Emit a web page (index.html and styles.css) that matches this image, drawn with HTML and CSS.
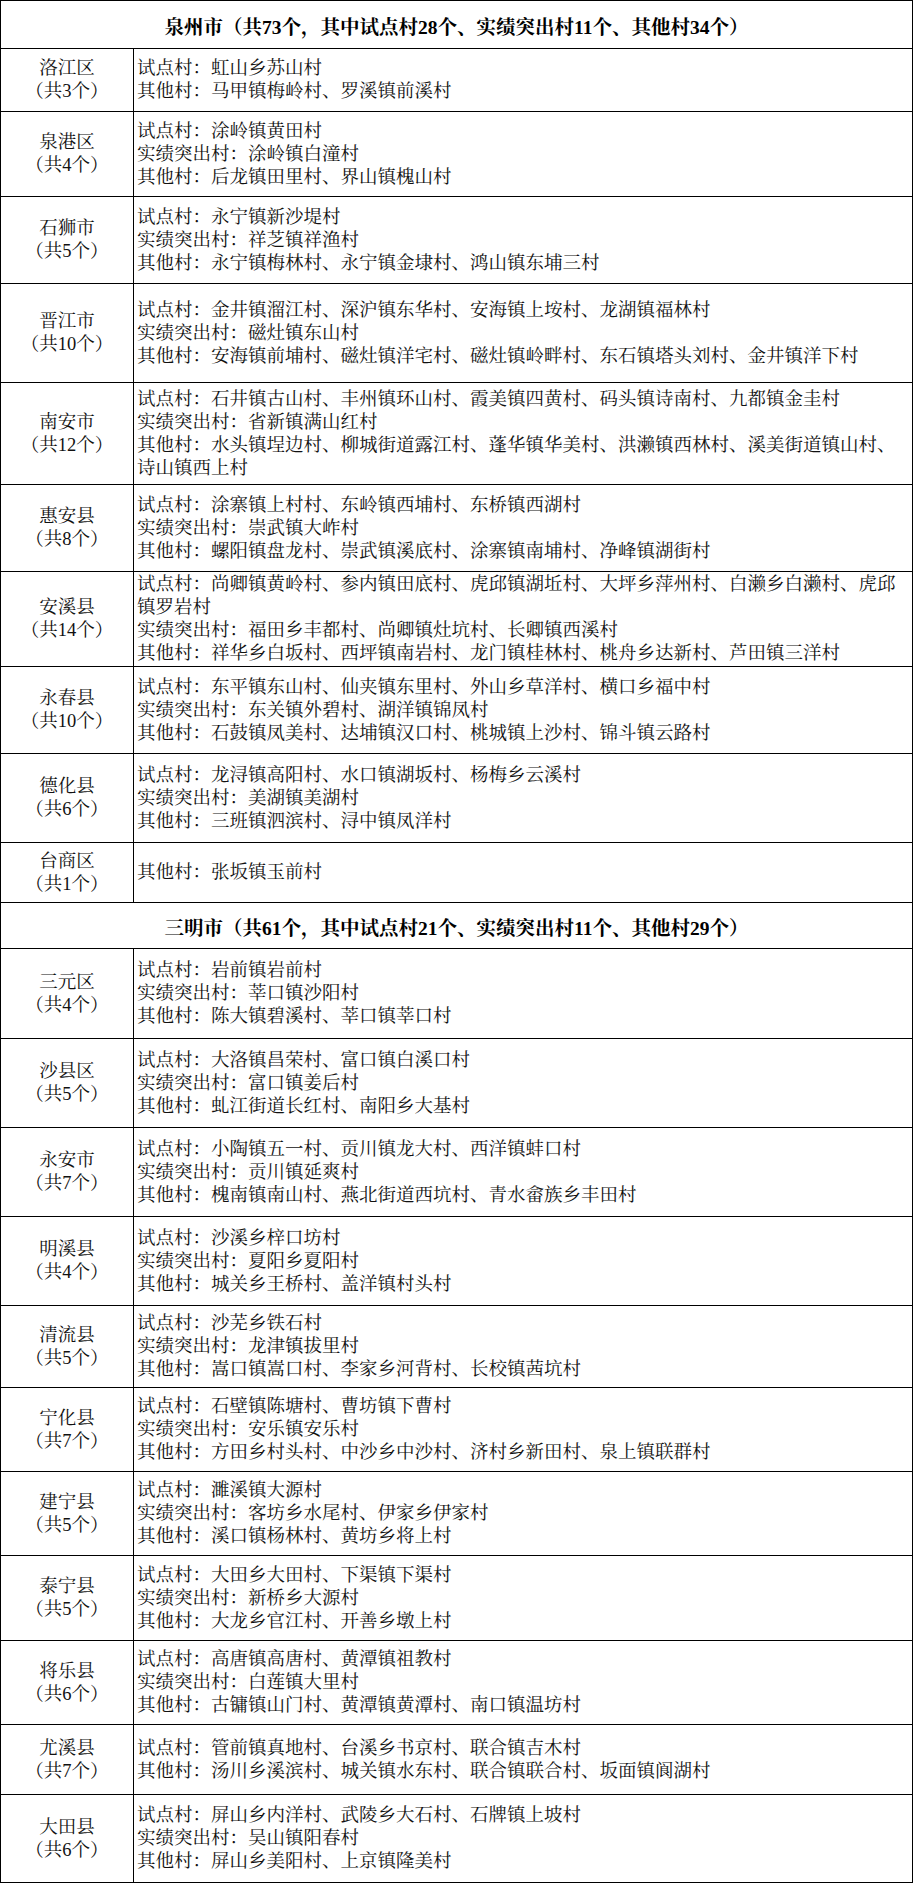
FILE: index.html
```html
<!DOCTYPE html>
<html lang="zh-CN">
<head>
<meta charset="utf-8">
<title>乡村振兴村名单</title>
<link rel="stylesheet" href="styles.css">
</head>
<body>
<div class="sheet">
  <div class="cell city">泉州市（共73个，其中试点村28个、实绩突出村11个、其他村34个）</div>

  <div class="cell county"><span>洛江区</span><span>（共3个）</span></div>
  <div class="cell list">
    <p>试点村：虹山乡苏山村</p>
    <p>其他村：马甲镇梅岭村、罗溪镇前溪村</p>
  </div>

  <div class="cell county"><span>泉港区</span><span>（共4个）</span></div>
  <div class="cell list">
    <p>试点村：涂岭镇黄田村</p>
    <p>实绩突出村：涂岭镇白潼村</p>
    <p>其他村：后龙镇田里村、界山镇槐山村</p>
  </div>

  <div class="cell county"><span>石狮市</span><span>（共5个）</span></div>
  <div class="cell list">
    <p>试点村：永宁镇新沙堤村</p>
    <p>实绩突出村：祥芝镇祥渔村</p>
    <p>其他村：永宁镇梅林村、永宁镇金埭村、鸿山镇东埔三村</p>
  </div>

  <div class="cell county"><span>晋江市</span><span>（共10个）</span></div>
  <div class="cell list">
    <p>试点村：金井镇溜江村、深沪镇东华村、安海镇上垵村、龙湖镇福林村</p>
    <p>实绩突出村：磁灶镇东山村</p>
    <p>其他村：安海镇前埔村、磁灶镇洋宅村、磁灶镇岭畔村、东石镇塔头刘村、金井镇洋下村</p>
  </div>

  <div class="cell county"><span>南安市</span><span>（共12个）</span></div>
  <div class="cell list">
    <p>试点村：石井镇古山村、丰州镇环山村、霞美镇四黄村、码头镇诗南村、九都镇金圭村</p>
    <p>实绩突出村：省新镇满山红村</p>
    <p>其他村：水头镇埕边村、柳城街道露江村、蓬华镇华美村、洪濑镇西林村、溪美街道镇山村、诗山镇西上村</p>
  </div>

  <div class="cell county"><span>惠安县</span><span>（共8个）</span></div>
  <div class="cell list">
    <p>试点村：涂寨镇上村村、东岭镇西埔村、东桥镇西湖村</p>
    <p>实绩突出村：崇武镇大岞村</p>
    <p>其他村：螺阳镇盘龙村、崇武镇溪底村、涂寨镇南埔村、净峰镇湖街村</p>
  </div>

  <div class="cell county"><span>安溪县</span><span>（共14个）</span></div>
  <div class="cell list">
    <p>试点村：尚卿镇黄岭村、参内镇田底村、虎邱镇湖坵村、大坪乡萍州村、白濑乡白濑村、虎邱镇罗岩村</p>
    <p>实绩突出村：福田乡丰都村、尚卿镇灶坑村、长卿镇西溪村</p>
    <p>其他村：祥华乡白坂村、西坪镇南岩村、龙门镇桂林村、桃舟乡达新村、芦田镇三洋村</p>
  </div>

  <div class="cell county"><span>永春县</span><span>（共10个）</span></div>
  <div class="cell list">
    <p>试点村：东平镇东山村、仙夹镇东里村、外山乡草洋村、横口乡福中村</p>
    <p>实绩突出村：东关镇外碧村、湖洋镇锦凤村</p>
    <p>其他村：石鼓镇凤美村、达埔镇汉口村、桃城镇上沙村、锦斗镇云路村</p>
  </div>

  <div class="cell county"><span>德化县</span><span>（共6个）</span></div>
  <div class="cell list">
    <p>试点村：龙浔镇高阳村、水口镇湖坂村、杨梅乡云溪村</p>
    <p>实绩突出村：美湖镇美湖村</p>
    <p>其他村：三班镇泗滨村、浔中镇凤洋村</p>
  </div>

  <div class="cell county"><span>台商区</span><span>（共1个）</span></div>
  <div class="cell list">
    <p>其他村：张坂镇玉前村</p>
  </div>

  <div class="cell city">三明市（共61个，其中试点村21个、实绩突出村11个、其他村29个）</div>

  <div class="cell county"><span>三元区</span><span>（共4个）</span></div>
  <div class="cell list">
    <p>试点村：岩前镇岩前村</p>
    <p>实绩突出村：莘口镇沙阳村</p>
    <p>其他村：陈大镇碧溪村、莘口镇莘口村</p>
  </div>

  <div class="cell county"><span>沙县区</span><span>（共5个）</span></div>
  <div class="cell list">
    <p>试点村：大洛镇昌荣村、富口镇白溪口村</p>
    <p>实绩突出村：富口镇姜后村</p>
    <p>其他村：虬江街道长红村、南阳乡大基村</p>
  </div>

  <div class="cell county"><span>永安市</span><span>（共7个）</span></div>
  <div class="cell list">
    <p>试点村：小陶镇五一村、贡川镇龙大村、西洋镇蚌口村</p>
    <p>实绩突出村：贡川镇延爽村</p>
    <p>其他村：槐南镇南山村、燕北街道西坑村、青水畲族乡丰田村</p>
  </div>

  <div class="cell county"><span>明溪县</span><span>（共4个）</span></div>
  <div class="cell list">
    <p>试点村：沙溪乡梓口坊村</p>
    <p>实绩突出村：夏阳乡夏阳村</p>
    <p>其他村：城关乡王桥村、盖洋镇村头村</p>
  </div>

  <div class="cell county"><span>清流县</span><span>（共5个）</span></div>
  <div class="cell list">
    <p>试点村：沙芜乡铁石村</p>
    <p>实绩突出村：龙津镇拔里村</p>
    <p>其他村：嵩口镇嵩口村、李家乡河背村、长校镇茜坑村</p>
  </div>

  <div class="cell county"><span>宁化县</span><span>（共7个）</span></div>
  <div class="cell list">
    <p>试点村：石壁镇陈塘村、曹坊镇下曹村</p>
    <p>实绩突出村：安乐镇安乐村</p>
    <p>其他村：方田乡村头村、中沙乡中沙村、济村乡新田村、泉上镇联群村</p>
  </div>

  <div class="cell county"><span>建宁县</span><span>（共5个）</span></div>
  <div class="cell list">
    <p>试点村：濉溪镇大源村</p>
    <p>实绩突出村：客坊乡水尾村、伊家乡伊家村</p>
    <p>其他村：溪口镇杨林村、黄坊乡将上村</p>
  </div>

  <div class="cell county"><span>泰宁县</span><span>（共5个）</span></div>
  <div class="cell list">
    <p>试点村：大田乡大田村、下渠镇下渠村</p>
    <p>实绩突出村：新桥乡大源村</p>
    <p>其他村：大龙乡官江村、开善乡墩上村</p>
  </div>

  <div class="cell county"><span>将乐县</span><span>（共6个）</span></div>
  <div class="cell list">
    <p>试点村：高唐镇高唐村、黄潭镇祖教村</p>
    <p>实绩突出村：白莲镇大里村</p>
    <p>其他村：古镛镇山门村、黄潭镇黄潭村、南口镇温坊村</p>
  </div>

  <div class="cell county"><span>尤溪县</span><span>（共7个）</span></div>
  <div class="cell list">
    <p>试点村：管前镇真地村、台溪乡书京村、联合镇吉木村</p>
    <p>其他村：汤川乡溪滨村、城关镇水东村、联合镇联合村、坂面镇阆湖村</p>
  </div>

  <div class="cell county"><span>大田县</span><span>（共6个）</span></div>
  <div class="cell list">
    <p>试点村：屏山乡内洋村、武陵乡大石村、石牌镇上坡村</p>
    <p>实绩突出村：吴山镇阳春村</p>
    <p>其他村：屏山乡美阳村、上京镇隆美村</p>
  </div>
</div>
</body>
</html>
```

FILE: styles.css
```css
html, body {
  margin: 0;
  padding: 0;
  background: #ffffff;
}

body {
  color: #111111;
  font-family: "Liberation Serif", "Noto Serif CJK SC", "Noto Sans CJK SC", serif;
}

.sheet {
  display: grid;
  box-sizing: border-box;
  width: 913px;
  grid-template-columns: 133px 779px;
  grid-template-rows:
    48px 63px 85px 87px 99px 102px 87px 95px 87px 89px 60px
    46px 90px 89px 89px 89px 82px 84px 84px 85px 84px 70px 88px;
  border-top: 1px solid #000;
  border-left: 1px solid #000;
}

.cell {
  box-sizing: border-box;
  display: flex;
  flex-direction: column;
  justify-content: center;
  border-right: 1px solid #000;
  border-bottom: 1px solid #000;
  min-width: 0;
}

.city {
  grid-column: 1 / -1;
  align-items: center;
  padding-top: 3px;
  font-size: 19.5px;
  font-weight: bold;
  color: #000;
}

.county {
  align-items: center;
  font-size: 18.5px;
  line-height: 23px;
  text-align: center;
}

.list {
  padding: 0 3px 0 3px;
  font-size: 18.5px;
  line-height: 23px;
}

.list p {
  margin: 0;
}
```
